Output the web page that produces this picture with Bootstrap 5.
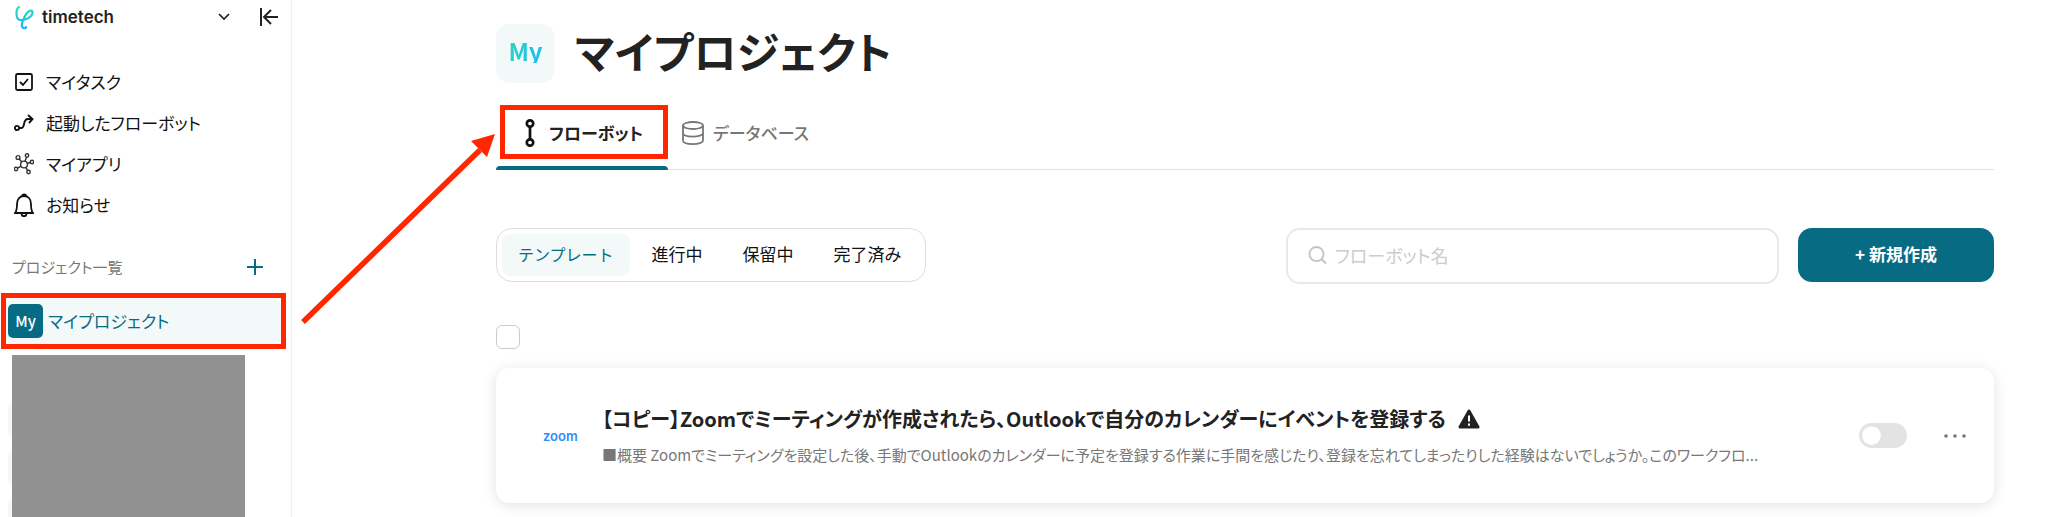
<!DOCTYPE html>
<html lang="ja">
<head>
<meta charset="utf-8">
<meta name="viewport" content="width=device-width, initial-scale=1">
<title>マイプロジェクト</title>
<link href="https://cdn.jsdelivr.net/npm/bootstrap@5.3.0/dist/css/bootstrap.min.css" rel="stylesheet">
<style>
:root{--teal:#086b84;--pale:#f3f9f9;--ink:#222;--muted:#777;--line:#ddd;--note:#ff2600}
body{font-family:"Noto Sans CJK JP",sans-serif;font-feature-settings:"palt";font-size:17px;line-height:24px;color:var(--ink);background:#fff}
.shell{height:100vh;overflow:hidden}
.side{flex:0 0 292px;border-right:1px solid #f1f1f1;padding:4px 5px 0}
.brand{height:26px;padding-left:9px;padding-right:7px;font-family:Inter,sans-serif;font-weight:600}
.side-nav{padding-top:31px}
.side-nav a{height:41px;padding-left:9px;gap:12px;color:#111;text-decoration:none}
.side-nav svg{flex:0 0 20px}
.side-head{height:44px;margin-top:20px;padding:0 23px 0 7px;font-size:15px;color:var(--muted)}
.btn-plain{border:0;background:none;padding:0;color:inherit;line-height:0}
.collapse-btn{margin-left:29px}
.project{height:45px;margin:10px 5px 0 0;padding:0 0 2px 3px;gap:5px;border-radius:8px;background:var(--pale);color:var(--teal);text-decoration:none}
.project-icon{width:35px;height:34px;border-radius:5px;background:var(--teal);color:#fff;font-size:15px;font-weight:500}
.callout-box{border:5px solid var(--note);pointer-events:none}
.project .callout-box{inset:-6px -5px -5px -4px}
.pending{min-height:0;margin-top:11px;padding:48px 0 0 3px;gap:14px}
.pending i{flex:none;width:35px;height:34px;border-radius:5px;background:var(--pale)}
.cover{inset:0 41px 0 7px;background:#919191}
.content{min-width:0;padding:24px 54px 0 204px}
.title-icon{width:59px;height:59px;padding-bottom:6px;border-radius:14px;background:var(--pale);font-size:24px;font-weight:700}
.title-icon span{background:linear-gradient(100deg,#2ed3c4,#19bdf0);-webkit-background-clip:text;background-clip:text;color:transparent}
h1{height:59px;font-size:43px;line-height:52px;font-weight:700}
.tabs{margin-top:22px;border-bottom:1px solid #e2e2e2}
.tabs a{height:64px;padding-bottom:8px;color:var(--muted);font-weight:500;text-decoration:none}
.tabs .other{padding-left:14px;gap:9px}
.tabs .current{width:172px;padding-left:27px;gap:12px;color:var(--ink);font-weight:700}
.tabs .current::after{content:"";position:absolute;left:0;right:0;bottom:-1px;height:4px;border-radius:4px 4px 0 0;background:var(--teal)}
.tabs .current .callout-box{inset:0 0 10px 4px}
.tools{margin-top:58px;gap:19px}
.segments{height:54px;padding:5px;gap:4px;border:1px solid var(--line);border-radius:16px}
.segments button{border:0;border-radius:8px;background:none;height:42px;padding:0 18px 2px;color:#111}
.segments .on{padding:0 16px 2px;background:var(--pale);color:var(--teal);font-size:16px}
.search{width:493px;height:56px;padding:0 20px 2px;gap:6px;border:2px solid #e6e9ef;border-radius:14px}
.search input{border:0;outline:0;width:100%;background:none;font-feature-settings:inherit;font-size:18px}
.search input::placeholder{color:#ccc;opacity:1}
.create{width:196px;height:54px;padding-bottom:4px;border:0;border-radius:14px;background:var(--teal);color:#fff;font-weight:700}
.pick-row{margin-top:41px}
.form-check-input.pick{width:24px;height:24px;margin:0;border:1px solid #ccc;border-radius:6px}
.flow{margin-top:19px;min-height:135px;border-radius:14px;padding:0 27px 0 47px;box-shadow:0 2px 14px rgba(0,0,0,.12)}
.zoom-logo{width:59px;flex:none;font-family:Inter,sans-serif;font-weight:600;font-size:13px;color:#2d8cff}
.flow h2{font-size:20px;line-height:28px;font-weight:700;margin:0;gap:12px}
.flow p{font-size:15px;line-height:22px;margin:11px 0 0;color:var(--muted);white-space:nowrap}
.more-btn{margin-left:36px}
.form-check-input.toggle{width:48px;height:25px;margin:0;border:0;background-color:#e3e3e3;border-radius:13px;background-image:url("data:image/svg+xml,%3csvg xmlns='http://www.w3.org/2000/svg' viewBox='-4 -4 8 8'%3e%3ccircle r='3' fill='%23fff'/%3e%3c/svg%3e")}
.guide{left:290px;top:120px;pointer-events:none}
</style>
</head>
<body>
<div class="shell d-flex position-relative">
<aside class="side d-flex flex-column">
  <div class="brand d-flex align-items-center flex-shrink-0">
    <svg width="20" height="26" viewBox="0 0 20 26" fill="none" stroke="url(#g)" stroke-width="2.2" stroke-linecap="round"><defs><linearGradient id="g" x1="0" y1="0" x2="0" y2="1"><stop stop-color="#32dcb4"/><stop offset="1" stop-color="#14b4fb"/></linearGradient></defs><path d="M5 3C2 4 1 15 6 16C12 17 19 12 18.500 8C18 5 13 7 11 12C9 16 7 20 8 22.500C9 25 12 24.500 12 23"/></svg>
    <span class="ms-2">timetech</span>
    <button class="btn-plain ms-auto" aria-label="ワークスペースを切り替え"><svg width="12" height="8" viewBox="0 0 12 8" fill="none" stroke="#222" stroke-width="1.7"><path d="M1 1l5 5 5-5"/></svg></button>
    <button class="btn-plain collapse-btn" aria-label="メニューを閉じる"><svg width="20" height="20" viewBox="0 0 20 20" fill="none" stroke="#222" stroke-width="2"><path d="M2 1v18M19 10H6M12 3l-7 7 7 7"/></svg></button>
  </div>
  <nav class="side-nav d-flex flex-column flex-shrink-0">
    <a href="#" class="d-flex align-items-center"><svg width="20" height="20" viewBox="0 0 20 20" fill="none" stroke="#111" stroke-width="1.8"><rect x="2" y="2" width="16" height="16" rx="1.5"/><path d="M6 10l3 3 5-6"/></svg>マイタスク</a>
    <a href="#" class="d-flex align-items-center"><svg width="20" height="18" viewBox="0 0 20 18" fill="none" stroke="#111" stroke-width="1.9"><circle cx="3" cy="14" r="2.1"/><path d="M5 14h2c5 0 1-9 7-9h4M14 1l4.500 4L15 9"/></svg>起動したフローボット</a>
    <a href="#" class="d-flex align-items-center"><svg width="20" height="22" viewBox="0 0 20 22" fill="none" stroke="#333" stroke-width="1.4"><circle cx="10" cy="11.500" r="3.400"/><circle cx="4" cy="4.500" r="1.900"/><circle cx="13" cy="2.500" r="1.700"/><circle cx="18" cy="9" r="1.700"/><circle cx="2" cy="16" r="1.700"/><circle cx="14.500" cy="19" r="1.700"/><path d="M5.300 6l2.500 3M12.500 4.200L11 8.200M16.300 9.500l-3 1M3.600 15.200l3.400-2M13.700 17.400L11.700 14.600"/></svg>マイアプリ</a>
    <a href="#" class="d-flex align-items-center"><svg width="20" height="24" viewBox="0 0 20 24" fill="none" stroke="#111" stroke-width="1.8"><path d="M1 20c2-2 2-5 2-9 0-5 3-8 7-8s7 3 7 8c0 4 0 7 2 9zM8 3c0-2 4-2 4 0M7.500 21c.5 3 4.500 3 5 0"/></svg>お知らせ</a>
  </nav>
  <div class="side-head d-flex align-items-center justify-content-between flex-shrink-0">プロジェクト一覧
    <button class="btn-plain" aria-label="プロジェクトを追加"><svg width="16" height="16" viewBox="0 0 16 16" stroke="#086b84" stroke-width="2"><path d="M8 0v16M0 8h16"/></svg></button>
  </div>
  <a href="#" class="project d-flex align-items-center position-relative flex-shrink-0"><span class="project-icon d-flex align-items-center justify-content-center">My</span>マイプロジェクト<span class="callout-box position-absolute"></span></a>
  <div class="pending d-flex flex-column flex-grow-1 position-relative overflow-hidden"><i></i><i></i><i></i><div class="cover position-absolute"></div></div>
</aside>
<main class="content flex-grow-1">
  <header class="d-flex align-items-center">
    <div class="title-icon d-flex align-items-center justify-content-center"><span>My</span></div>
    <h1 class="mb-0 ms-3 ps-1">マイプロジェクト</h1>
  </header>
  <nav class="tabs d-flex">
    <a href="#" class="current d-flex align-items-center position-relative"><svg width="14" height="30" viewBox="0 0 14 30" fill="none" stroke="#111" stroke-width="2.700"><circle cx="7" cy="5.500" r="3.200"/><circle cx="7" cy="24.500" r="3.200"/><path d="M7 8v14"/></svg>フローボット<span class="callout-box position-absolute"></span></a>
    <a href="#" class="other d-flex align-items-center"><svg width="22" height="24" viewBox="0 0 22 24" fill="none" stroke="#777" stroke-width="1.800"><ellipse cx="11" cy="4.500" rx="10" ry="3.500"/><path d="M1 4.500v15c0 4.700 20 4.700 20 0v-15M1 12c0 4.700 20 4.700 20 0"/></svg>データベース</a>
  </nav>
  <div class="tools d-flex align-items-start">
    <div class="segments d-flex"><button class="on">テンプレート</button><button>進行中</button><button>保留中</button><button>完了済み</button></div>
    <label class="search d-flex align-items-center ms-auto"><svg width="20" height="20" viewBox="0 0 20 20" fill="none" stroke="#c4c4c4" stroke-width="2"><circle cx="9" cy="9" r="7.500"/><path d="M14 14l5 5"/></svg><input type="text" placeholder="フローボット名" aria-label="フローボット名"></label>
    <button class="create">+ 新規作成</button>
  </div>
  <div class="pick-row d-flex"><input type="checkbox" class="form-check-input pick" aria-label="すべて選択"></div>
  <article class="flow d-flex align-items-center">
    <div class="zoom-logo">zoom</div>
    <div class="flow-text">
      <h2 class="d-flex align-items-center">【コピー】Zoomでミーティングが作成されたら、Outlookで自分のカレンダーにイベントを登録する<svg width="22" height="20" viewBox="0 0 22 20"><path d="M11 2L20 18H2z" fill="#222" stroke="#222" stroke-width="3" stroke-linejoin="round"/><path d="M11 6.500v6M11 14.500v2.300" stroke="#fff" stroke-width="2"/></svg></h2>
      <p>■概要 Zoomでミーティングを設定した後、手動でOutlookのカレンダーに予定を登録する作業に手間を感じたり、登録を忘れてしまったりした経験はないでしょうか。このワークフロ...</p>
    </div>
    <div class="form-switch p-0 ms-auto d-flex"><input type="checkbox" role="switch" class="form-check-input toggle" aria-label="フローボットを有効にする"></div>
    <button class="btn-plain more-btn" aria-label="その他の操作"><svg width="24" height="6" viewBox="0 0 24 6" fill="#777"><circle cx="3" cy="3" r="1.800"/><circle cx="12" cy="3" r="1.800"/><circle cx="21" cy="3" r="1.800"/></svg></button>
  </article>
</main>
<svg class="guide position-absolute" width="210" height="210" viewBox="290 120 210 210"><path d="M303 322L480 150" stroke="#ff2600" stroke-width="5.500"/><path d="M495 134L471 141L487 157z" fill="#ff2600"/></svg>
</div>
<script src="https://cdn.jsdelivr.net/npm/bootstrap@5.3.0/dist/js/bootstrap.bundle.min.js"></script>
</body>
</html>
